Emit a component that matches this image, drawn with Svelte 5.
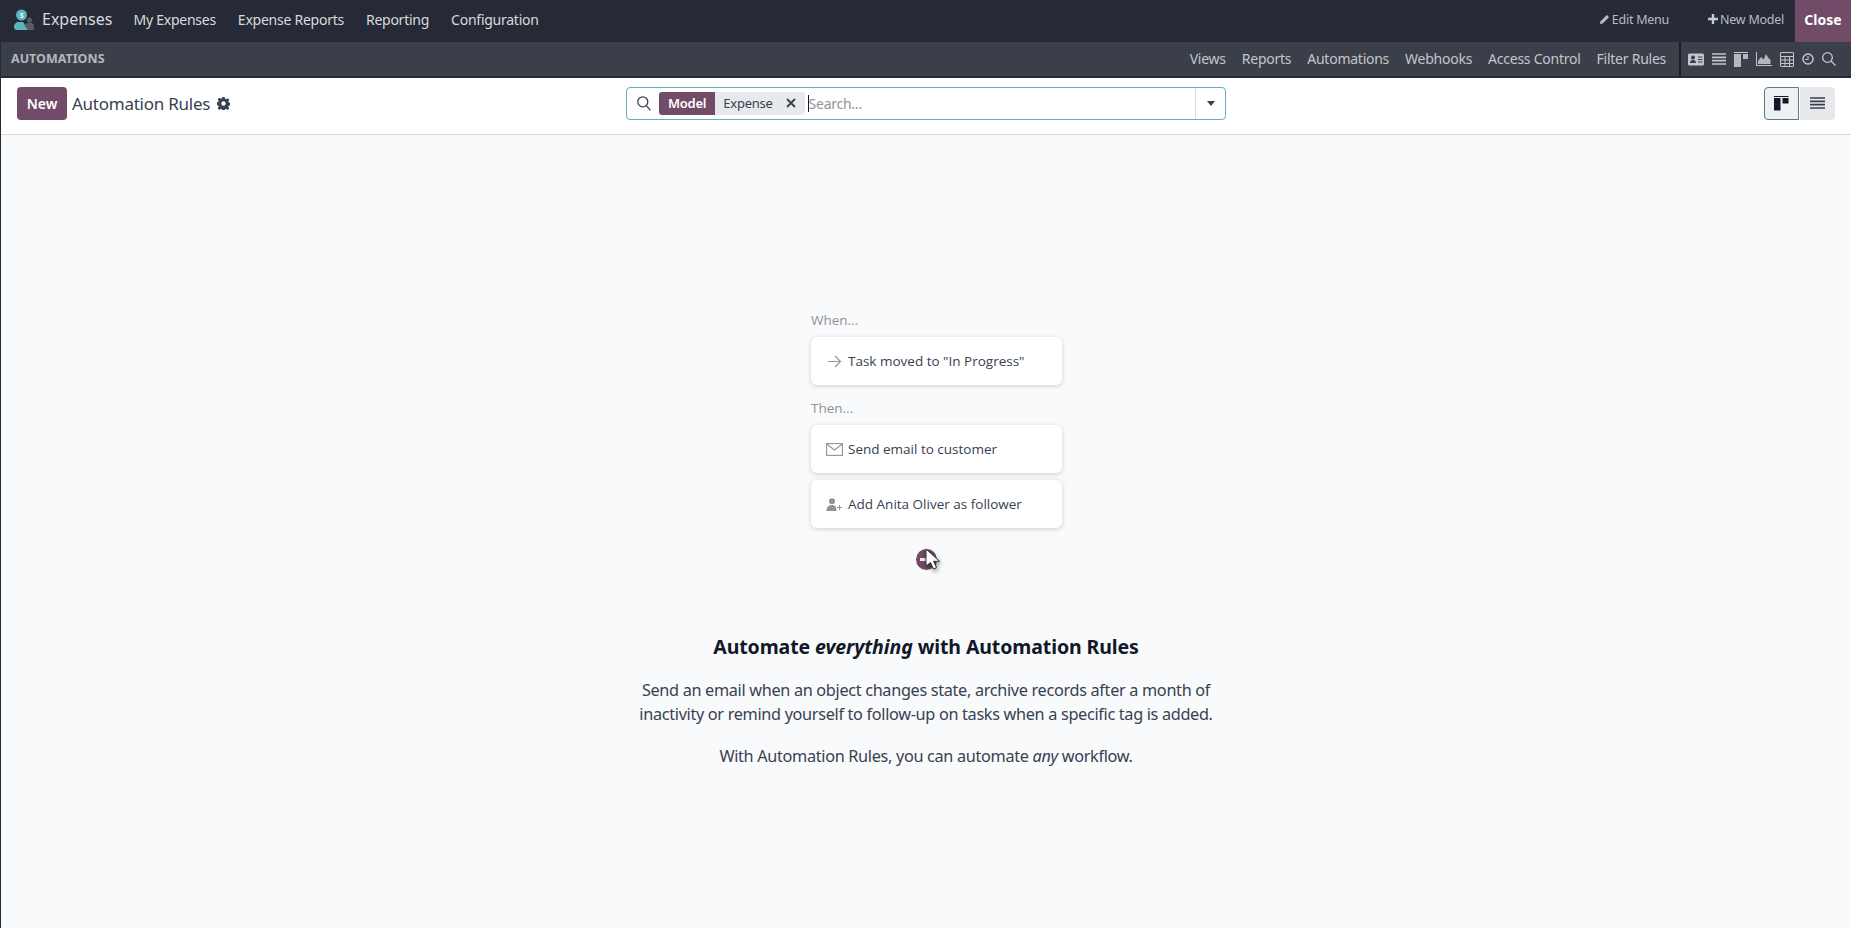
<script>
  const menus = ["My Expenses", "Expense Reports", "Reporting", "Configuration"];
  const studioLinks = ["Views", "Reports", "Automations", "Webhooks", "Access Control", "Filter Rules"];
</script>

<div class="page">
  <header class="navbar">
    <svg class="logo" width="20" height="21" viewBox="0 0 20 21">
      <circle cx="7.500" cy="6" r="5.500" fill="#5fb3bf" />
      <text x="7.500" y="8.500" class="logo-s">S</text>
      <path d="M0 18c0-3 2-5 5-5h4l5 8H3c-2 0-3-1-3-3z" fill="#5fb3bf" />
      <circle cx="15.500" cy="11" r="2.500" fill="#565b65" />
      <path d="M11 17c0-2 2-3.500 4.500-3.500S20 15 20 17v4h-6z" fill="#565b65" />
    </svg>
    <span class="app-name">Expenses</span>
    {#each menus as m}
      <span class="menu">{m}</span>
    {/each}
    <div class="spacer"></div>
    <span class="studio-action">
      <svg width="11" height="11" viewBox="0 0 12 12"><path d="M1 11l.7-3L8 1.700a1 1 0 0 1 1.400 0l.9.9a1 1 0 0 1 0 1.400L4 10.300z" fill="#b9bcc3" /></svg>
      Edit Menu
    </span>
    <span class="studio-action new-model">
      <svg width="10" height="10" viewBox="0 0 10 10"><path d="M3.800 0h2.400v3.800H10v2.400H6.200V10H3.800V6.200H0V3.800h3.800z" fill="#c8cbd1" /></svg>
      New Model
    </span>
    <button class="close">Close</button>
  </header>

  <nav class="subbar">
    <span class="section">AUTOMATIONS</span>
    <div class="spacer"></div>
    {#each studioLinks as l}
      <span class="sub-link">{l}</span>
    {/each}
    <div class="views">
      <svg width="16" height="13" viewBox="0 0 16 13"><rect width="16" height="12" y=".5" rx="1.500" fill="#c3c6cc" /><circle cx="5" cy="4.500" r="2" fill="#3b3f49" /><path d="M2 10c0-2 1-3 3-3s3 1 3 3z" fill="#3b3f49" /><path d="M10 4h4.500M10 6.500h4.500M10 9h4.500" stroke="#3b3f49" stroke-width="1.100" /></svg>
      <svg width="14" height="12" viewBox="0 0 14 12"><path d="M0 1h14M0 4.300h14M0 7.700h14M0 11h14" stroke="#c3c6cc" stroke-width="1.700" /></svg>
      <svg width="14" height="15" viewBox="0 0 14 15"><path d="M0 .5h14" stroke="#c3c6cc" /><rect y="2" width="7" height="13" fill="#b4b7bd" /><rect x="9" y="2" width="5" height="5" fill="#b4b7bd" /></svg>
      <svg width="16" height="14" viewBox="0 0 16 14"><path d="M.5 0v13.500H16" stroke="#c3c6cc" fill="none" /><path d="M2 12V9l3-4 2.500 2.500L10 2l2.500 4 2 2v4z" fill="#b4b7bd" /></svg>
      <svg width="14" height="15" viewBox="0 0 14 15" fill="none" stroke="#c3c6cc"><rect x=".5" y=".5" width="13" height="14" rx=".5" /><path d="M.5 4.500h13M.5 8h13M.5 11.500h13M5 4.500v10M9.500 4.500v10" /></svg>
      <svg width="12" height="12" viewBox="0 0 13 13" fill="none" stroke="#c3c6cc"><circle cx="6.500" cy="6.500" r="5.500" stroke-width="1.600" /><path d="M6.500 3v4H3.500" stroke-width="1.200" /></svg>
      <svg width="14" height="14" viewBox="0 0 14 14" fill="none" stroke="#c3c6cc" stroke-width="1.300"><circle cx="5.500" cy="5.500" r="4.800" /><path d="M9 9l4.500 4.500" /></svg>
    </div>
  </nav>

  <section class="control">
    <div class="ctrl-left">
      <button class="new">New</button>
      <span class="title">Automation Rules</span>
      <svg width="13" height="13" viewBox="0 0 16 16"><path fill-rule="evenodd" fill="#374151" d="M6.500 0h3l.4 2.200 1.300.6 1.900-1.300 2.100 2.100-1.300 1.900.6 1.300 2.200.4v3l-2.200.4-.6 1.300 1.300 1.900-2.100 2.100-1.900-1.300-1.300.6-.4 2.200h-3l-.4-2.200-1.300-.6-1.900 1.300-2.100-2.100 1.300-1.900-.6-1.300L-.7 9.500v-3l2.200-.4.6-1.300-1.300-1.900 2.100-2.100 1.900 1.300 1.300-.6zM8 5.300a2.700 2.700 0 1 0 0 5.400 2.700 2.700 0 0 0 0-5.400z" /></svg>
    </div>
    <div class="search">
      <svg class="mag" width="14" height="15" viewBox="0 0 14 15" fill="none" stroke="#374151" stroke-width="1.300"><circle cx="5.800" cy="5.800" r="5" /><path d="M9.400 9.600l4 4.800" /></svg>
      <div class="facet">
        <span class="facet-label">Model</span>
        <span class="facet-value">Expense
          <svg width="10" height="10" viewBox="0 0 10 10"><path d="M1 1l8 8M9 1l-8 8" stroke="#374151" stroke-width="1.800" /></svg>
        </span>
      </div>
      <span class="caret"></span>
      <span class="placeholder">Search...</span>
      <span class="dropdown"><i class="tri"></i></span>
    </div>
    <div class="switch">
      <button class="sw active" aria-label="Kanban">
        <svg width="15" height="15" viewBox="0 0 15 15"><path d="M0 .5h14.500" stroke="#111827" /><rect y="2" width="6.500" height="12.500" fill="#111827" /><rect x="8.500" y="2" width="6" height="5.500" fill="#111827" /></svg>
      </button>
      <button class="sw" aria-label="List">
        <svg width="15" height="12" viewBox="0 0 15 12"><path d="M0 1h15M0 4.300h15M0 7.700h15M0 11h15" stroke="#374151" stroke-width="1.700" /></svg>
      </button>
    </div>
  </section>

  <main class="content">
    <div class="demo">
      <div class="label">When...</div>
      <div class="card">
        <svg class="ico" width="15" height="13" viewBox="0 0 15 13" fill="none" stroke="#8f9298" stroke-width="1.100"><path d="M1 6.500h12.500M8 1l5.500 5.500L8 12" /></svg>
        Task moved to "In Progress"
      </div>
      <div class="label then">Then...</div>
      <div class="card">
        <svg class="ico" width="17" height="13" viewBox="0 0 17 13" fill="none" stroke="#8f9298" stroke-width="1.100"><rect x=".6" y=".6" width="15.800" height="11.800" /><path d="M.6 1l7.900 6 7.900-6" /></svg>
        Send email to customer
      </div>
      <div class="card second">
        <svg class="ico" width="16" height="13" viewBox="0 0 16 13" fill="#8f9298"><circle cx="5.500" cy="3.300" r="3" /><path d="M0 13c0-4 2-6 5.500-6S10 9 10 13z" /><path d="M10.500 9.500h5M13 7v5" stroke="#8f9298" fill="none" /></svg>
        Add Anita Oliver as follower
      </div>
      <div class="plus-row">
        <span class="plus"><i></i>
          <svg class="cursor" width="18" height="24" viewBox="0 0 18 24"><path d="M2 1l0 17 4.500-3.500 3 6.500 3-1.500-3-6.200h6z" fill="#fff" stroke="#333" stroke-width="1" /></svg>
        </span>
      </div>
    </div>
    <h2>Automate <em>everything</em> with Automation Rules</h2>
    <p>Send an email when an object changes state, archive records after a month of<br />inactivity or remind yourself to follow-up on tasks when a specific tag is added.</p>
    <p>With Automation Rules, you can automate <em>any</em> workflow.</p>
  </main>
</div>

<style>
  :global(body) {
    margin: 0;
    background: #f9fafb;
  }
  .page {
    height: 928px;
    display: flex;
    flex-direction: column;
    font-family: "Noto Sans", sans-serif;
    letter-spacing: -0.25px;
    border-left: 1px solid #262a36;
    box-sizing: border-box;
    overflow: hidden;
  }
  .navbar {
    height: 42px;
    background: #262a36;
    display: flex;
    align-items: center;
    color: #d8dadd;
    flex: none;
  }
  .navbar > svg,
  .navbar > span {
    margin-bottom: 4px;
  }
  .logo {
    margin-left: 13px;
    flex: none;
  }
  .logo-s {
    font-size: 7px;
    font-weight: 700;
    fill: #fff;
    text-anchor: middle;
  }
  .app-name {
    font-size: 16px;
    margin-left: 8px;
    margin-right: 10px;
    letter-spacing: 0;
    color: #d8dadd;
  }
  .menu {
    font-size: 14px;
    padding: 0 11px;
    color: #d8dadd;
  }
  .spacer {
    flex: 1;
  }
  .studio-action {
    font-size: 12.500px;
    color: #b9bcc3;
    display: flex;
    align-items: center;
    gap: 2px;
    margin-right: 39px;
  }
  .new-model {
    margin-right: 11px;
  }
  .close {
    width: 56px;
    height: 42px;
    border: 0;
    background: #714b67;
    color: #fff;
    font: 700 14px "Noto Sans", sans-serif;
    padding: 0 0 4px;
  }
  .subbar {
    height: 34px;
    background: #3b3f49;
    border-bottom: 2px solid #262a36;
    display: flex;
    align-items: center;
    flex: none;
    color: #c3c6cc;
  }
  .subbar > span {
    margin-bottom: 2px;
  }
  .section {
    font-size: 12.500px;
    font-weight: 700;
    margin-left: 10px;
    letter-spacing: 0;
    color: #b4b7bd;
  }
  .sub-link {
    font-size: 14px;
    margin-left: 16px;
  }
  .views {
    height: 100%;
    display: flex;
    align-items: center;
    gap: 8px;
    border-left: 2px solid #1a1f2e;
    margin-left: 13px;
    padding: 0 15px 0 7px;
  }
  .control {
    height: 57px;
    background: #fff;
    border-bottom: 1px solid #d8dadd;
    display: flex;
    align-items: center;
    flex: none;
    padding-bottom: 6px;
    box-sizing: border-box;
  }
  .ctrl-left {
    display: flex;
    align-items: center;
    width: 625px;
    padding-left: 16px;
    box-sizing: border-box;
  }
  .new {
    width: 50px;
    height: 33px;
    background: #714b67;
    color: #fff;
    font: 600 14px "Noto Sans", sans-serif;
    border: 0;
    border-radius: 4px;
    padding: 0;
  }
  .title {
    font-size: 17px;
    color: #374151;
    margin: 0 7px 0 5px;
  }
  .search {
    width: 600px;
    height: 33px;
    box-sizing: border-box;
    border: 1px solid #5eb1bd;
    border-radius: 4px;
    display: flex;
    align-items: center;
    padding-left: 10px;
  }
  .mag {
    margin-right: 8px;
    flex: none;
  }
  .facet {
    display: flex;
    height: 23px;
    font-size: 13px;
    line-height: 23px;
  }
  .facet-label {
    background: #714b67;
    color: #fff;
    font-weight: 600;
    padding: 0 9px;
    border-radius: 3px 0 0 3px;
  }
  .facet-value {
    background: #e7e9ed;
    color: #374151;
    padding: 0 9px 0 8px;
    border-radius: 0 3px 3px 0;
    display: flex;
    align-items: center;
    gap: 13px;
  }
  .caret {
    width: 1px;
    height: 17px;
    background: #111827;
    margin-left: 3px;
  }
  .placeholder {
    flex: 1;
    font-size: 14px;
    color: #8f949c;
  }
  .dropdown {
    width: 29px;
    align-self: stretch;
    border-left: 1px solid #d8dadd;
    display: flex;
    align-items: center;
    justify-content: center;
  }
  .tri {
    border: 4px solid transparent;
    border-top: 5px solid #374151;
    border-bottom: 0;
  }
  .switch {
    margin-left: auto;
    margin-right: 16px;
    display: flex;
    gap: 1px;
  }
  .sw {
    width: 35px;
    height: 33px;
    border: 0;
    padding: 0;
    background: #e7e9ed;
    border-radius: 0 4px 4px 0;
    display: flex;
    align-items: center;
    justify-content: center;
  }
  .sw.active {
    background: #eef1f3;
    border: 1px solid #5c7a83;
    border-radius: 4px 0 0 4px;
  }
  .content {
    flex: 1;
    background: #f9fafb;
    display: flex;
    flex-direction: column;
    align-items: center;
    text-align: center;
    color: #374151;
  }
  .demo {
    width: 251px;
    margin-top: 175px;
    margin-left: 21px;
    text-align: left;
    font-family: "Open Sans", sans-serif;
    letter-spacing: 0;
  }
  .label {
    font-size: 13.500px;
    line-height: 20px;
    color: #8f9298;
    margin-bottom: 7px;
  }
  .label.then {
    margin-top: 13px;
  }
  .card {
    height: 48px;
    background: #fff;
    border-radius: 6px;
    box-shadow: 0 1px 5px rgba(0, 0, 0, .18);
    display: flex;
    align-items: center;
    font-size: 13.500px;
    color: #374151;
    padding-left: 14px;
    box-sizing: border-box;
  }
  .card .ico {
    width: 19px;
    flex: none;
    margin-right: 4px;
  }
  .second {
    margin-top: 7px;
  }
  .plus-row {
    margin-top: 21px;
    padding-left: 105px;
    height: 22px;
  }
  .plus {
    display: block;
    width: 21px;
    height: 21px;
    border-radius: 50%;
    background: #714b67;
    position: relative;
  }
  .plus i {
    position: absolute;
    left: 4px;
    top: 9px;
    width: 9px;
    height: 3px;
    background: #eee;
  }
  .cursor {
    position: absolute;
    left: 8px;
    top: -1px;
    filter: drop-shadow(1px 2px 2px rgba(0, 0, 0, .5));
  }
  h2 {
    font-size: 19.500px;
    font-weight: 700;
    letter-spacing: -0.1px;
    margin: 62px 0 0;
    line-height: 28px;
    color: #111827;
  }
  p {
    font-size: 16.250px;
    letter-spacing: -0.32px;
    line-height: 24px;
    margin: 17px 0 0;
  }
  p + p {
    margin-top: 18px;
  }
</style>
